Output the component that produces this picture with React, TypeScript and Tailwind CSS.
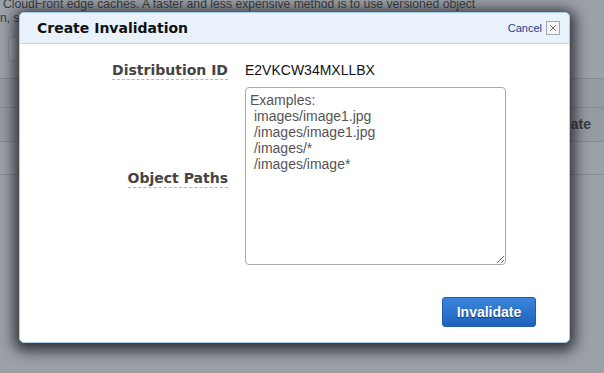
import { X } from "lucide-react";

const paths = ["images/image1.jpg", "/images/image1.jpg", "/images/*", "/images/image*"];

function FieldLabel({ children }: { children: string }) {
  return (
    <span className="border-b border-dashed border-[#b5b5b5] font-['DejaVu_Sans',sans-serif] text-[14px] font-bold leading-[17px] text-[#444]">
      {children}
    </span>
  );
}

export default function App() {
  return (
    <div className="relative h-[373px] w-[604px] overflow-hidden bg-[#9ca1a8] font-['Liberation_Sans',Arial,sans-serif]">
      {/* page behind the overlay */}
      <div className="flex flex-col">
        <div className="h-[34px] text-[12.2px] leading-[14px] text-[#3b3d40]">
          <p className="-mt-[3px] whitespace-nowrap pl-[3px]">
            CloudFront edge caches. A faster and less expensive method is to use versioned object
          </p>
          <p className="whitespace-nowrap">n, s</p>
        </div>
        <div className="ml-[8px] mt-[3px] h-[24px] w-[40px] rounded-[3px] border border-[#8d9298] bg-[#a3a8ae]" />
        <div className="mt-[17px] h-[29px] border-t border-[#868b91] bg-[#969ba2]" />
        <div className="flex h-[34px] items-center justify-end border-t border-[#868b91] bg-[#969ba2] pr-[13px]">
          <span className="text-[14px] font-bold text-[#3a3c40]">Date</span>
        </div>
        <div className="h-[33px] border-t border-[#868b91]" />
        <div className="border-t border-[#868b91]" />
      </div>

      {/* modal */}
      <div className="absolute left-[19px] top-[12px] flex h-[331px] w-[551px] flex-col overflow-hidden rounded-[5px] border border-[#a9cbec] bg-white shadow-[0_3px_14px_5px_rgba(20,22,26,0.8)]">
        <div className="flex h-[31px] items-center justify-between border-b border-[#bed7ef] bg-[#e9f1fb] pl-[17px] pr-[9px]">
          <h2 className="font-['DejaVu_Sans',sans-serif] text-[14px] font-bold text-[#111]">Create Invalidation</h2>
          <div className="flex items-center gap-[4px]">
            <span className="text-[11px] text-[#1b3f8b]">Cancel</span>
            <span className="flex h-[14px] w-[14px] items-center justify-center border border-[#a4a8ad] bg-[#f2f2f2]">
              <X size={10} strokeWidth={2} className="text-[#555]" />
            </span>
          </div>
        </div>

        <div className="grid grid-cols-[208px_1fr] gap-x-[17px] pt-[18px]">
          <div className="flex justify-end">
            <FieldLabel>Distribution ID</FieldLabel>
          </div>
          <div className="text-[14px] leading-[17px] text-[#111]">E2VKCW34MXLLBX</div>

          <div className="flex items-center justify-end pt-[12px]">
            <FieldLabel>Object Paths</FieldLabel>
          </div>
          <textarea
            readOnly
            defaultValue={"Examples:\n" + paths.map((p) => " " + p).join("\n")}
            className="mt-[7px] h-[178px] w-[261px] resize rounded-[4px] border border-[#a9a9a9] px-[4px] py-[4px] text-[14px] leading-[16px] text-[#555] outline-none"
          />
        </div>

        <div className="flex justify-end pr-[33px] pt-[32px]">
          <button className="h-[30px] w-[94px] rounded-[3px] border border-[#1f5cae] bg-gradient-to-b from-[#3a86da] to-[#1c62bd] text-[14px] font-bold text-white [text-shadow:0_1px_1px_rgba(0,0,0,0.5)]">
            Invalidate
          </button>
        </div>
      </div>
    </div>
  );
}
